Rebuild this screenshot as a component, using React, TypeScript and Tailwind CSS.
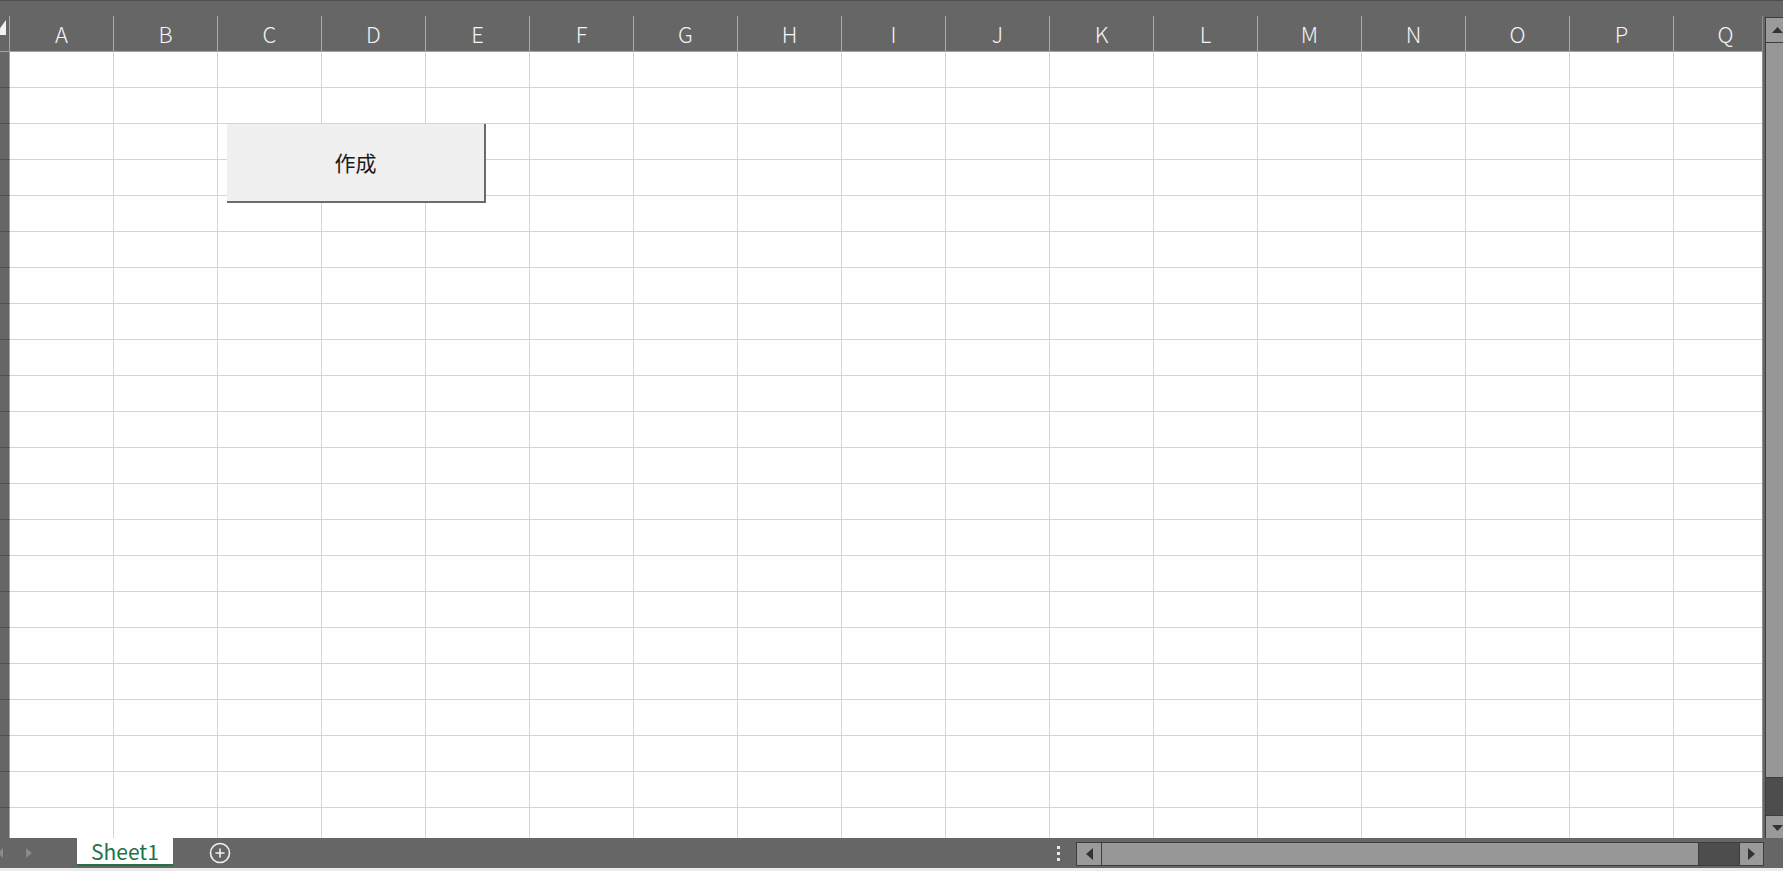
const COLS = 'ABCDEFGHIJKLMNOPQ'.split('');
const ROWS = Array.from({ length: 22 }, (_, i) => i);

function VScrollbar() {
  return (
    <div className="mt-[1px] h-[822px] w-[23px] shrink-0 flex flex-col border-l border-t border-[#3d3d3d] bg-[#4d4d4d]">
      <div className="h-[25px] shrink-0 bg-[#9a9a9a] border-b border-[#3d3d3d] flex items-center justify-center">
        <svg width="11" height="6" viewBox="0 0 11 6">
          <polygon points="0,6 5.5,0 11,6" fill="#333" />
        </svg>
      </div>
      <div className="h-[735px] shrink-0 bg-[#979797] border-b border-[#3d3d3d]" />
      <div className="flex-1" />
      <div className="h-[24px] shrink-0 bg-[#9a9a9a] border-t border-[#3d3d3d] flex items-center justify-center">
        <svg width="11" height="6" viewBox="0 0 11 6">
          <polygon points="0,0 11,0 5.5,6" fill="#333" />
        </svg>
      </div>
    </div>
  );
}

function HScrollbar() {
  return (
    <div className="mt-[4px] self-start ml-[16px] w-[688px] h-[24px] shrink-0 flex border border-[#3d3d3d] bg-[#4d4d4d]">
      <div className="w-[25px] shrink-0 bg-[#9a9a9a] border-r border-[#3d3d3d] flex items-center justify-center">
        <svg width="7" height="12" viewBox="0 0 7 12">
          <polygon points="7,0 7,12 0,6" fill="#333" />
        </svg>
      </div>
      <div className="w-[597px] shrink-0 bg-[#979797] border-r border-[#3d3d3d]" />
      <div className="flex-1" />
      <div className="w-[24px] shrink-0 bg-[#9a9a9a] border-l border-[#3d3d3d] flex items-center justify-center">
        <svg width="7" height="12" viewBox="0 0 7 12">
          <polygon points="0,0 7,6 0,12" fill="#333" />
        </svg>
      </div>
    </div>
  );
}

export default function App() {
  return (
    <div className="relative w-[1783px] h-[871px] overflow-hidden bg-[#666666] flex flex-col font-['Liberation_Sans',sans-serif]">
      {/* title strip */}
      <div className="h-[16px] shrink-0 border-t border-[#4e4e4e]" />

      {/* sheet area */}
      <div className="h-[822px] shrink-0 flex overflow-hidden">
        <div className="w-[1762px] shrink-0 flex flex-col overflow-hidden">
          {/* column headers */}
          <div className="h-[36px] shrink-0 flex border-b border-[#a3a3a3]">
            <div className="relative w-[10px] shrink-0 border-r border-[#a8a8a8]">
              <svg className="absolute left-0 top-[3px]" width="9" height="17" viewBox="0 0 9 17">
                <polygon points="-5,16 6,1 6,16" fill="#f2f2f2" />
              </svg>
            </div>
            {COLS.map((c) => (
              <div
                key={c}
                className="w-[104px] shrink-0 border-r border-[#ababab] flex items-center justify-center pb-[1px] text-[22px] leading-none text-[#f4f4f4] font-['Noto_Sans_CJK_JP',sans-serif] font-light"
              >
                {c}
              </div>
            ))}
          </div>

          {/* rows */}
          <div className="flex-1 flex flex-col overflow-hidden">
            {ROWS.map((r) => (
              <div key={r} className="h-[36px] shrink-0 flex">
                <div className="w-[10px] shrink-0 bg-[#666666] border-r border-r-[#a3a3a3] border-b border-b-[#505050]" />
                {COLS.map((c) => (
                  <div key={c} className="w-[104px] shrink-0 bg-white border-r border-b border-[#d4d4d4]" />
                ))}
              </div>
            ))}
          </div>
        </div>
        <div className="w-[3px] shrink-0 border-l border-[#8f8f8f]" />
        <VScrollbar />
      </div>

      {/* sheet tabs */}
      <div className="h-[30px] shrink-0 flex items-center">
        <svg className="shrink-0" width="77" height="30" viewBox="0 0 77 30">
          <polygon points="3,10 3,20 -2,15" fill="#8a8a8a" />
          <polygon points="26,10 32,15 26,20" fill="#8a8a8a" />
        </svg>
        <div className="w-[96px] h-[28px] self-start shrink-0 bg-white border-b-2 border-[#217346] flex items-center justify-center text-[21px] leading-none text-[#217346] font-['Noto_Sans_CJK_JP',sans-serif]">
          Sheet1
        </div>
        <svg className="ml-[36px] shrink-0" width="22" height="22" viewBox="0 0 22 22">
          <circle cx="11" cy="11" r="9.5" fill="none" stroke="#f2f2f2" strokeWidth="1.6" />
          <path d="M11 6.5v9M6.5 11h9" stroke="#f2f2f2" strokeWidth="1.6" />
        </svg>
        <div className="ml-[826px] w-[3px] shrink-0 flex flex-col gap-[3px]">
          <span className="block w-[3px] h-[3px] bg-[#e8e8e8]" />
          <span className="block w-[3px] h-[3px] bg-[#e8e8e8]" />
          <span className="block w-[3px] h-[3px] bg-[#e8e8e8]" />
        </div>
        <HScrollbar />
      </div>

      {/* window bottom edge */}
      <div className="flex-1 bg-[#ececec]" />

      {/* form button floating over the sheet */}
      <button className="absolute left-[227px] top-[124px] w-[259px] h-[79px] bg-[#f0f0f0] border-r-2 border-b-2 border-[#6b6b6b] flex items-center justify-center text-[21px] text-[#1a1a1a] font-['Noto_Sans_CJK_JP',sans-serif]">
        作成
      </button>
    </div>
  );
}
